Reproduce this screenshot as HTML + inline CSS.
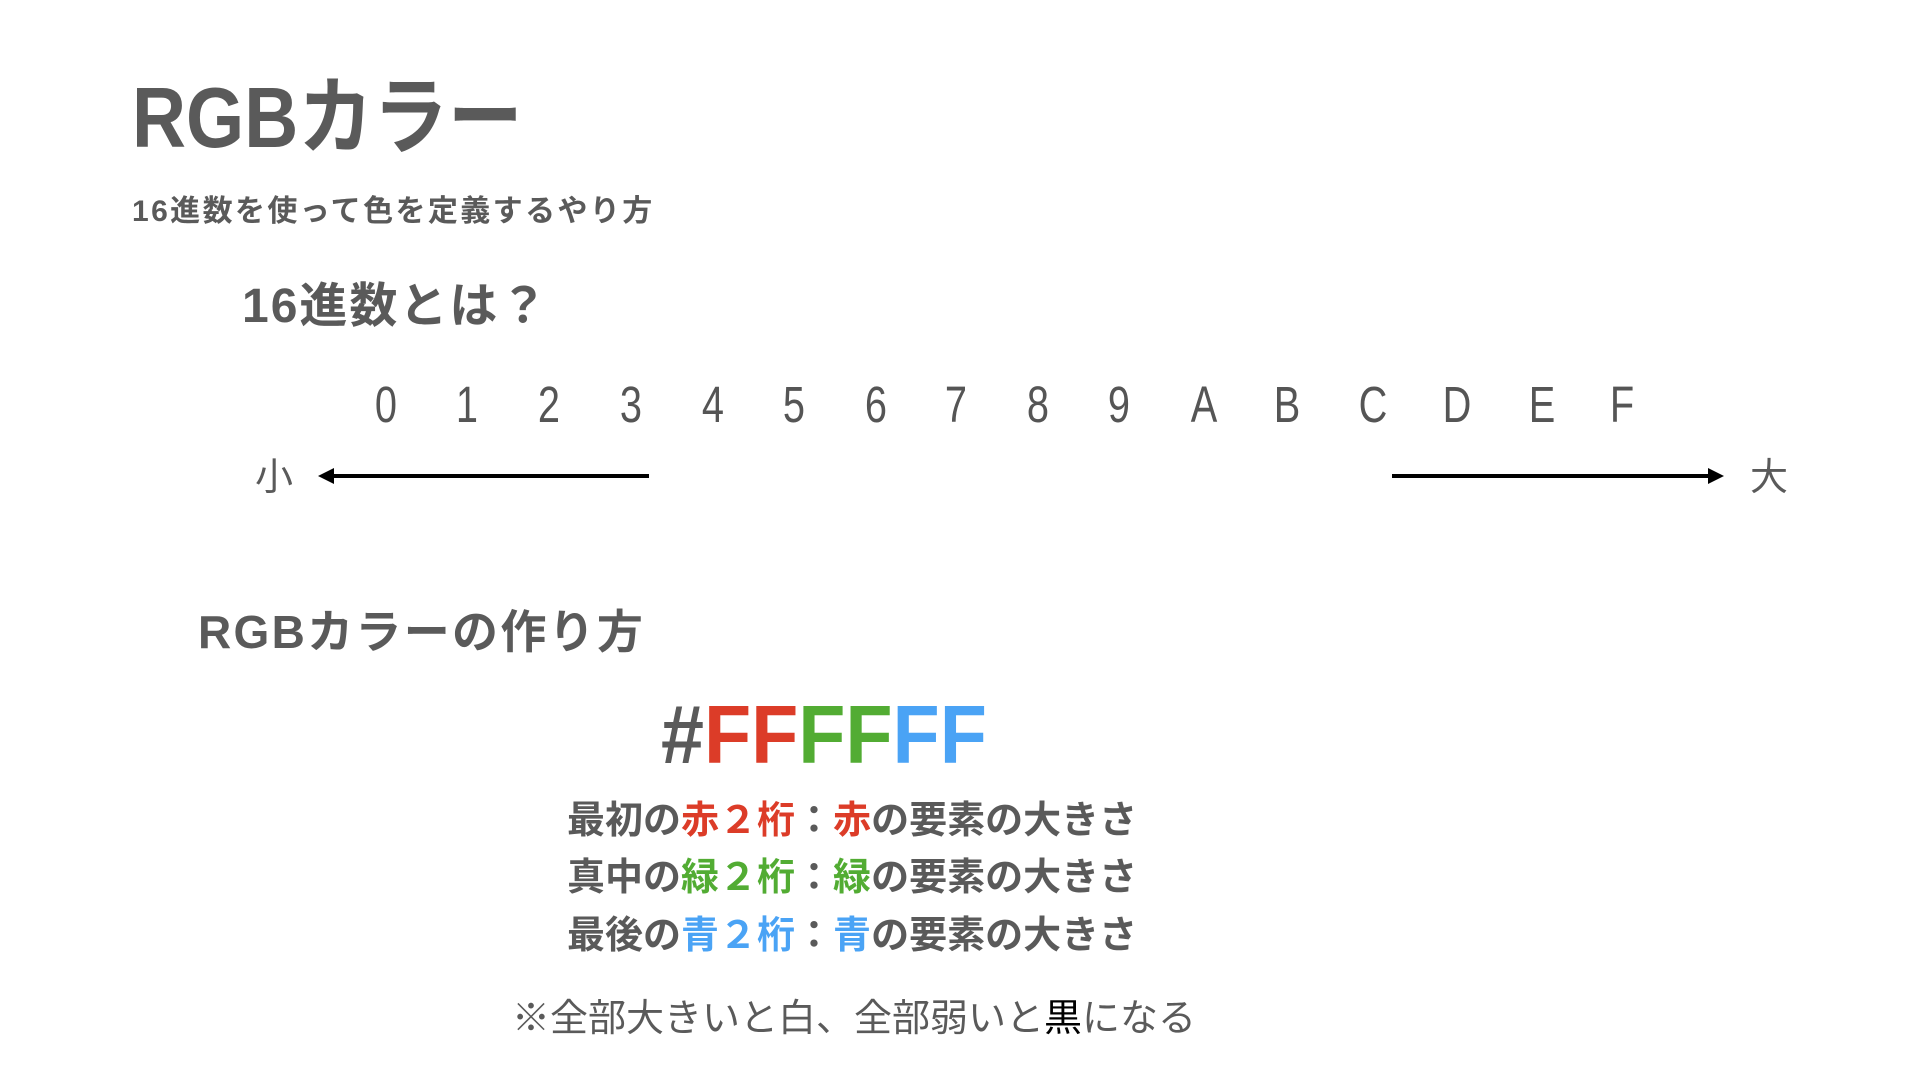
<!DOCTYPE html>
<html><head><meta charset="utf-8"><style>
html,body{margin:0;padding:0;width:1920px;height:1080px;background:#fff;overflow:hidden}
body{font-family:"Liberation Sans","Noto Sans CJK JP",sans-serif;color:#5a5a5a}
.a{position:absolute;line-height:1;white-space:nowrap}
.b{font-weight:bold}
.d{position:absolute;top:379px;font-size:51px;line-height:1;transform:translateX(-50%) scaleX(0.78);color:#555}
.r{color:#dc3c28}.g{color:#52ac33}.u{color:#4aa3f5}
.ln{position:absolute;height:4px;background:#000;top:474px}
</style></head><body>
<div class="a b" style="left:132px;top:76px;font-size:85px;transform-origin:0 0;transform:scaleX(0.88)">RGBカラー</div>
<div class="a b" style="left:132px;top:197px;font-size:30px;letter-spacing:2.4px">16進数を使って色を定義するやり方</div>
<div class="a b" style="left:242px;top:283px;font-size:48px;letter-spacing:2px">16進数とは？</div>

<div class="d" style="left:386px">0</div><div class="d" style="left:467px">1</div><div class="d" style="left:549px">2</div><div class="d" style="left:631px">3</div><div class="d" style="left:713px">4</div><div class="d" style="left:794px">5</div><div class="d" style="left:876px">6</div><div class="d" style="left:956px">7</div><div class="d" style="left:1038px">8</div><div class="d" style="left:1119px">9</div><div class="d" style="left:1204px">A</div><div class="d" style="left:1287px">B</div><div class="d" style="left:1373px">C</div><div class="d" style="left:1457px">D</div><div class="d" style="left:1542px">E</div><div class="d" style="left:1622px">F</div>

<div class="a" style="left:255px;top:459px;font-size:38px">小</div>
<div class="ln" style="left:330px;width:319px"></div>
<svg style="position:absolute;left:316px;top:466px" width="20" height="20"><polygon points="2,10 18,2 18,18" fill="#000"/></svg>
<div class="ln" style="left:1392px;width:318px"></div>
<svg style="position:absolute;left:1706px;top:466px" width="20" height="20"><polygon points="18,10 2,2 2,18" fill="#000"/></svg>
<div class="a" style="left:1750px;top:459px;font-size:38px">大</div>

<div class="a b" style="left:198px;top:609px;font-size:46px;letter-spacing:2.3px">RGBカラーの作り方</div>
<div class="a b" style="left:661px;top:693px;font-size:83px;transform-origin:0 0;transform:scaleX(0.93)">#<span class="r">FF</span><span class="g">FF</span><span class="u">FF</span></div>

<div class="a b" style="left:567px;top:802px;font-size:38px">最初の<span class="r">赤２桁</span>：<span class="r">赤</span>の要素の大きさ</div>
<div class="a b" style="left:567px;top:859px;font-size:38px">真中の<span class="g">緑２桁</span>：<span class="g">緑</span>の要素の大きさ</div>
<div class="a b" style="left:567px;top:917px;font-size:38px">最後の<span class="u">青２桁</span>：<span class="u">青</span>の要素の大きさ</div>

<div class="a" style="left:512px;top:1000px;font-size:38px">※全部大きいと白、全部弱いと<span style="color:#000">黒</span>になる</div>
</body></html>
